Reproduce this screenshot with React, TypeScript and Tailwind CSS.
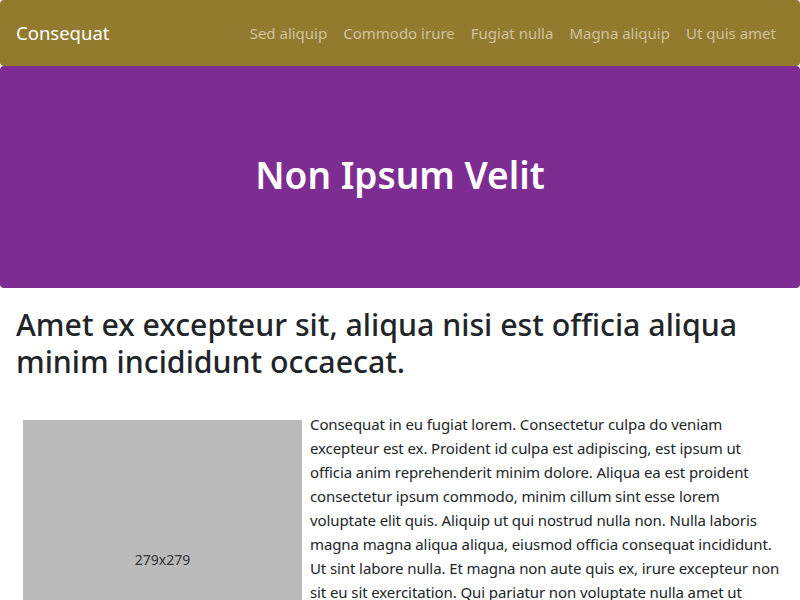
const links = ["Sed aliquip", "Commodo irure", "Fugiat nulla", "Magna aliquip", "Ut quis amet"];

export default function App() {
  return (
    <div className="min-h-[600px] bg-white font-['Noto_Sans',sans-serif] text-[#212529]">
      <nav className="flex h-[66px] items-center justify-between rounded bg-[#927a2e] px-4">
        <a className="text-[18.5px] text-white">Consequat</a>
        <ul className="flex">
          {links.map((l) => (
            <li key={l}>
              <a className="block px-2 text-[15px] text-[#cfc4a0]">{l}</a>
            </li>
          ))}
        </ul>
      </nav>

      <header className="flex h-[222px] items-center justify-center rounded bg-[#7d2d91] pb-1">
        <h1 className="text-[37px] leading-[44px] font-semibold text-white">Non Ipsum Velit</h1>
      </header>

      <main className="px-4 pt-[18px]">
        <h2 className="text-[30.3px] font-medium leading-[37px]">
          Amet ex excepteur sit, aliqua nisi est officia aliqua minim incididunt occaecat.
        </h2>
        <div className="mt-8">
          <div className="float-left mt-2 mr-2 ml-[7px] flex h-[279px] w-[279px] items-center justify-center bg-[#bbbbbb] text-[14px] text-[#333]">
            279x279
          </div>
          <p className="text-[15px] leading-6 tracking-[-0.1px]">
            Consequat in eu fugiat lorem. Consectetur culpa do veniam excepteur est ex. Proident id culpa est
            adipiscing, est ipsum ut officia anim reprehenderit minim dolore. Aliqua ea est proident consectetur
            ipsum commodo, minim cillum sint esse lorem voluptate elit quis. Aliquip ut qui nostrud nulla non.
            Nulla laboris magna magna aliqua aliqua, eiusmod officia consequat incididunt. Ut sint labore nulla.
            Et magna non aute quis ex, irure excepteur non sit eu sit exercitation. Qui pariatur non voluptate
            nulla amet ut
          </p>
        </div>
      </main>
    </div>
  );
}
